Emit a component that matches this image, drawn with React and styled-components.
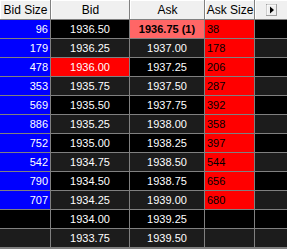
import React from "react";
import styled, { createGlobalStyle } from "styled-components";

const GlobalStyle = createGlobalStyle`
  html, body {
    margin: 0;
    padding: 0;
    background: #808080;
  }
`;

const Ladder = styled.div`
  display: grid;
  grid-template-columns: 50px 78px 74px 49px 32px;
  grid-auto-rows: 18px;
  grid-template-rows: 19px;
  gap: 1px;
  width: 287px;
  height: 249px;
  overflow: hidden;
  background: #808080;
  font-family: "Liberation Sans", Arial, sans-serif;
`;

const HeaderCell = styled.div`
  display: flex;
  align-items: center;
  justify-content: center;
  background: #f0f0f0;
  border-top: 1px solid #ffffff;
  border-left: 1px solid #ffffff;
  color: #000;
  font-size: 12px;
  box-sizing: border-box;
`;

const Cell = styled.div`
  display: flex;
  align-items: center;
  justify-content: ${(p) =>
    p.$align === "right" ? "flex-end" : p.$align === "left" ? "flex-start" : "center"};
  padding: 0 ${(p) => (p.$align === "center" ? 0 : 2)}px;
  background: ${(p) => p.$bg};
  color: ${(p) => p.$fg || "#ffffff"};
  font-size: 11px;
  font-weight: ${(p) => (p.$bold ? 700 : 400)};
  line-height: 18px;
  white-space: nowrap;
  overflow: hidden;
`;

const ArrowButton = () => (
  <svg width="11" height="12" viewBox="0 0 11 12">
    <rect x="0.5" y="0.5" width="10" height="11" fill="#f0f0f0" stroke="#a0a0a0" />
    <line x1="1" y1="1" x2="10" y2="1" stroke="#fff" />
    <line x1="1" y1="1" x2="1" y2="11" stroke="#fff" />
    <polygon points="4,2.5 8,6 4,9.5" fill="#000" />
  </svg>
);

const rows = [
  { bidSize: 96, bid: "1936.50", ask: "1936.75 (1)", askSize: 38, inside: true },
  { bidSize: 179, bid: "1936.25", ask: "1937.00", askSize: 178 },
  { bidSize: 478, bid: "1936.00", ask: "1937.25", askSize: 206, lastTrade: true },
  { bidSize: 353, bid: "1935.75", ask: "1937.50", askSize: 287 },
  { bidSize: 569, bid: "1935.50", ask: "1937.75", askSize: 392 },
  { bidSize: 886, bid: "1935.25", ask: "1938.00", askSize: 358 },
  { bidSize: 752, bid: "1935.00", ask: "1938.25", askSize: 397 },
  { bidSize: 542, bid: "1934.75", ask: "1938.50", askSize: 544 },
  { bidSize: 790, bid: "1934.50", ask: "1938.75", askSize: 656 },
  { bidSize: 707, bid: "1934.25", ask: "1939.00", askSize: 680 },
  { bidSize: null, bid: "1934.00", ask: "1939.25", askSize: null },
  { bidSize: null, bid: "1933.75", ask: "1939.50", askSize: null },
];

const App = () => {
  return (
    <>
      <GlobalStyle />
      <Ladder>
        <HeaderCell>Bid Size</HeaderCell>
        <HeaderCell>Bid</HeaderCell>
        <HeaderCell>Ask</HeaderCell>
        <HeaderCell>Ask Size</HeaderCell>
        <HeaderCell>
          <ArrowButton />
        </HeaderCell>

        {rows.map((r, i) => {
          const stripe = i % 2 === 0 ? "#000000" : "#1c1c1c";
          return (
            <React.Fragment key={i}>
              <Cell $align="right" $bg={r.bidSize != null ? "#0000ff" : stripe}>
                {r.bidSize}
              </Cell>
              <Cell $align="center" $bg={r.lastTrade ? "#ff0000" : stripe}>
                {r.bid}
              </Cell>
              <Cell
                $align="center"
                $bg={r.inside ? "#ff6666" : stripe}
                $fg={r.inside ? "#000" : "#fff"}
                $bold={r.inside}
              >
                {r.ask}
              </Cell>
              <Cell $align="left" $bg={r.askSize != null ? "#ff0000" : stripe} $fg="#000">
                {r.askSize}
              </Cell>
              <Cell $bg={stripe} />
            </React.Fragment>
          );
        })}
      </Ladder>
    </>
  );
};

export default App;
